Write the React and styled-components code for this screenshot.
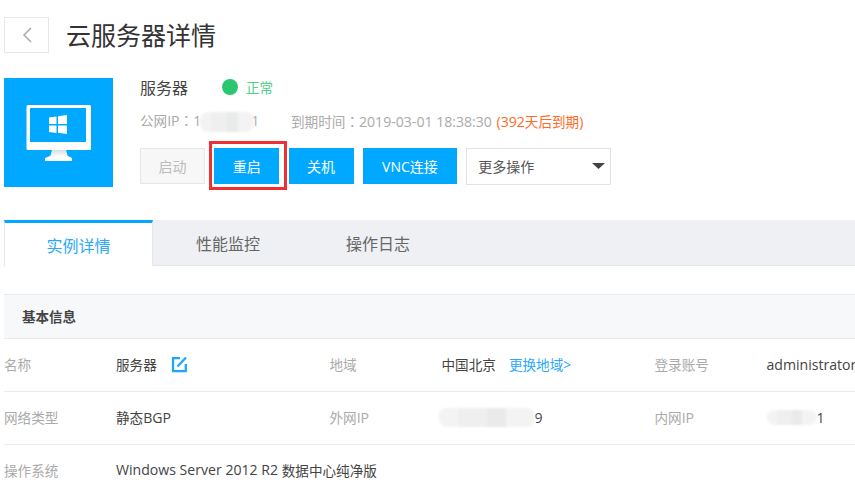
import React from 'react';
import styled, { createGlobalStyle, css } from 'styled-components';

const GlobalStyle = createGlobalStyle`
  html, body {
    margin: 0;
    padding: 0;
    background: #fff;
    font-family: 'Open Sans', 'Noto Sans CJK SC', sans-serif;
    color: #444;
  }
`;

function MonitorIcon() {
  return (
    <svg width='109' height='109' viewBox='0 0 109 109'>
      <defs>
        <linearGradient id='neck' x1='0' y1='0' x2='0' y2='1'>
          <stop offset='0' stopColor='#d5dfe4' />
          <stop offset='1' stopColor='#fff' />
        </linearGradient>
      </defs>
      <path
        fill='#fff'
        fillRule='evenodd'
        d='M24 27h61.500a1.500 1.500 0 0 1 1.500 1.500v42a1.500 1.500 0 0 1-1.500 1.500H24a1.500 1.500 0 0 1-1.500-1.500v-42A1.500 1.500 0 0 1 24 27z M26 30v34h56V30z'
      />
      <path fill='url(#neck)' d='M48 72h14l2 7H46z' />
      <path fill='#fff' d='M46 78h18l4 2v3H41v-3z' />
      <path
        fill='#fff'
        d='M45 39.500l7.500-1v7.500H45z M54 38.200l9-1.200v9h-9z M45 47.500h7.500V55L45 54z M54 47.500h9V56l-9-1.200z'
      />
    </svg>
  );
}

function EditIcon() {
  return (
    <svg width='16' height='17' viewBox='0 0 16 17'>
      <path
        fill='none'
        stroke='#1aa8ff'
        strokeWidth='2.300'
        d='M9 2.200H2v13h12.800V8'
      />
      <path fill='none' stroke='#1aa8ff' strokeWidth='2.300' d='M6.500 10.500L15 1.500' />
    </svg>
  );
}

function Caret() {
  return (
    <svg width='13' height='6' viewBox='0 0 13 6'>
      <path fill='#444' d='M0 0h13L6.500 6z' />
    </svg>
  );
}

export default function App() {
  return (
    <Page>
      <GlobalStyle />
      <Header>
        <BackButton>
          <svg width='12' height='16' viewBox='0 0 12 16'>
            <path fill='none' stroke='#aaa' strokeWidth='1.500' d='M10 1L3 8l7 7' />
          </svg>
        </BackButton>
        <Title>云服务器详情</Title>
      </Header>

      <Summary>
        <Cover>
          <MonitorIcon />
        </Cover>
        <Info>
          <NameRow>
            <Name>服务器</Name>
            <StatusDot />
            <StatusText>正常</StatusText>
          </NameRow>
          <MetaRow>
            <IpText>
              公网<Latin>IP</Latin><Colon>：</Colon><Latin>1</Latin>
              <Blur $w={54} $h={20} $shift={-1} />
              <Latin $shift={-3}>1</Latin>
            </IpText>
            <span>
              到期时间<Colon>：</Colon><Latin>2019-03-01 18:38:30</Latin>{' '}
              <Expire><Latin>(392</Latin>天后到期<Latin>)</Latin></Expire>
            </span>
          </MetaRow>
          <Actions>
            <Button disabled $w={65}>启动</Button>
            <Button $w={65} $highlight>重启</Button>
            <Button $w={65}>关机</Button>
            <Button $w={94}>VNC连接</Button>
            <Select>
              更多操作
              <Caret />
            </Select>
          </Actions>
        </Info>
      </Summary>

      <Tabs>
        <Tab $active>实例详情</Tab>
        <Tab>性能监控</Tab>
        <Tab>操作日志</Tab>
      </Tabs>

      <SectionHead>基本信息</SectionHead>
      <Table>
        <Row>
          <Label>名称</Label>
          <Value>
            服务器
            <EditWrap>
              <EditIcon />
            </EditWrap>
          </Value>
          <Label>地域</Label>
          <Value>
            中国北京<Link>更换地域&gt;</Link>
          </Value>
          <Label>登录账号</Label>
          <Value><Latin>administrator</Latin></Value>
        </Row>
        <Row>
          <Label>网络类型</Label>
          <Value>静态<Latin>BGP</Latin></Value>
          <Label>外网<Latin>IP</Latin></Label>
          <Value>
            <Blur $w={96} $h={19} $shift={-3} />
            <Latin>9</Latin>
          </Value>
          <Label>内网<Latin>IP</Latin></Label>
          <Value>
            <Blur $w={50} $h={15} />
            <Latin>1</Latin>
          </Value>
        </Row>
        <Row $last>
          <Label>操作系统</Label>
          <Value><Latin>Windows Server 2012 R2&nbsp;</Latin>数据中心纯净版</Value>
        </Row>
      </Table>
    </Page>
  );
}

const Page = styled.div`
  width: 855px;
  height: 494px;
  box-sizing: border-box;
  padding: 16px 0 0 4px;
  overflow: hidden;
`;

const Header = styled.div`
  display: flex;
  align-items: center;
  gap: 17px;
  height: 37px;
`;

const BackButton = styled.div`
  width: 45px;
  height: 36px;
  box-sizing: border-box;
  border: 1px solid #e6e6e6;
  display: flex;
  align-items: center;
  justify-content: center;
`;

const Title = styled.h1`
  margin: 1px 0 0;
  font-size: 25px;
  font-weight: 400;
  line-height: 37px;
  color: #333;
`;

const Summary = styled.div`
  display: flex;
  gap: 27px;
  margin-top: 25px;
`;

const Cover = styled.div`
  width: 109px;
  height: 109px;
  background: #00a9ff;
  svg {
    display: block;
  }
`;

const Info = styled.div`
  display: flex;
  flex-direction: column;
`;

const NameRow = styled.div`
  display: flex;
  align-items: center;
  height: 20px;
  margin-top: -1px;
`;

const Name = styled.span`
  font-size: 16px;
  color: #444;
  width: 82px;
`;

const StatusDot = styled.i`
  width: 16px;
  height: 16px;
  border-radius: 50%;
  background: #2bc670;
`;

const StatusText = styled.span`
  margin-left: 8px;
  font-size: 13.500px;
  color: #4fd08a;
`;

const MetaRow = styled.div`
  display: flex;
  align-items: center;
  height: 20px;
  margin-top: 14px;
  font-size: 13.600px;
  color: #aaa;
`;

const Latin = styled.span`
  font-size: 14.100px;
  margin-left: ${p => p.$shift || 0}px;
`;

const Colon = styled.span`
  font-family: 'Noto Sans CJK TC', sans-serif;
`;

const IpText = styled.span`
  width: 151px;
  flex: none;
  white-space: nowrap;
`;

const Expire = styled.span`
  margin-left: 1px;
  color: #ff6a26;
`;

/* masked address, the mottled smear from the reference */
const Blur = styled.span`
  display: inline-block;
  vertical-align: middle;
  width: ${p => p.$w}px;
  height: ${p => p.$h}px;
  margin-left: ${p => p.$shift || 0}px;
  background: linear-gradient(
    90deg,
    #f3f3f3 0 20%,
    #efefef 20% 50%,
    #e9eaea 50% 70%,
    #f3f3f3 70% 100%
  );
  border-radius: 8px;
  filter: blur(1px);
`;

const Actions = styled.div`
  display: flex;
  gap: 9.300px;
  margin-top: 17px;
`;

const Button = styled.button`
  position: relative;
  width: ${p => p.$w}px;
  height: 36px;
  box-sizing: border-box;
  padding: 0;
  border: 1px solid #00a9ff;
  background: #00a9ff;
  color: #fff;
  font-family: inherit;
  font-size: 14px;
  ${p =>
    p.disabled &&
    css`
      border-color: #e6e6e6;
      background: #f7f7f7;
      color: #bbb;
    `}
  ${p =>
    p.$highlight &&
    css`
      &::after {
        content: '';
        position: absolute;
        left: -6px;
        top: -8px;
        width: 78px;
        height: 49px;
        box-sizing: border-box;
        border: 3px solid #f03030;
      }
    `}
`;

const Select = styled.div`
  width: 145px;
  height: 37px;
  box-sizing: border-box;
  border: 1px solid #e3e3e3;
  display: flex;
  align-items: center;
  justify-content: space-between;
  padding: 0 5px 1px 11px;
  font-size: 14px;
  color: #555;
`;

const Tabs = styled.div`
  display: flex;
  height: 46px;
  box-sizing: border-box;
  margin-top: 33px;
  background: #eef0f3;
  border-bottom: 1px solid #e3e5e8;
`;

const Tab = styled.div`
  display: flex;
  align-items: center;
  justify-content: center;
  font-size: 16px;
  color: #666;
  width: 150px;
  ${p =>
    p.$active &&
    css`
      width: 149px;
      height: 46px;
      box-sizing: border-box;
      background: #fff;
      color: #2aa9fb;
      border-top: 3px solid #00a9ff;
      border-left: 1px solid #e6e6e6;
      border-right: 1px solid #e6e6e6;
      padding-top: 1px;
    `}
`;

const SectionHead = styled.div`
  height: 45px;
  box-sizing: border-box;
  margin-top: 28px;
  padding: 0 0 2px 18px;
  display: flex;
  align-items: center;
  background: #f7f8fa;
  border-top: 1px solid #e8eaed;
  border-bottom: 1px solid #e8eaed;
  font-size: 13.500px;
  font-weight: 700;
  color: #444;
`;

const Table = styled.div`
  display: flex;
  flex-direction: column;
`;

const Row = styled.div`
  display: grid;
  grid-template-columns: 112px 213.500px 112px 213px 112px 100px;
  align-items: center;
  height: 53px;
  box-sizing: border-box;
  padding-bottom: ${p => (p.$last ? '4px' : '2px')};
  font-size: 13.600px;
  border-bottom: ${p => (p.$last ? 'none' : '1px solid #ebebeb')};
`;

const Label = styled.div`
  color: #aaa;
`;

const Value = styled.div`
  display: flex;
  align-items: center;
  color: #444;
  white-space: nowrap;
`;

const EditWrap = styled.span`
  display: flex;
  margin-left: 14px;
`;

const Link = styled.span`
  margin-left: 13px;
  color: #2aa9fb;
`;
